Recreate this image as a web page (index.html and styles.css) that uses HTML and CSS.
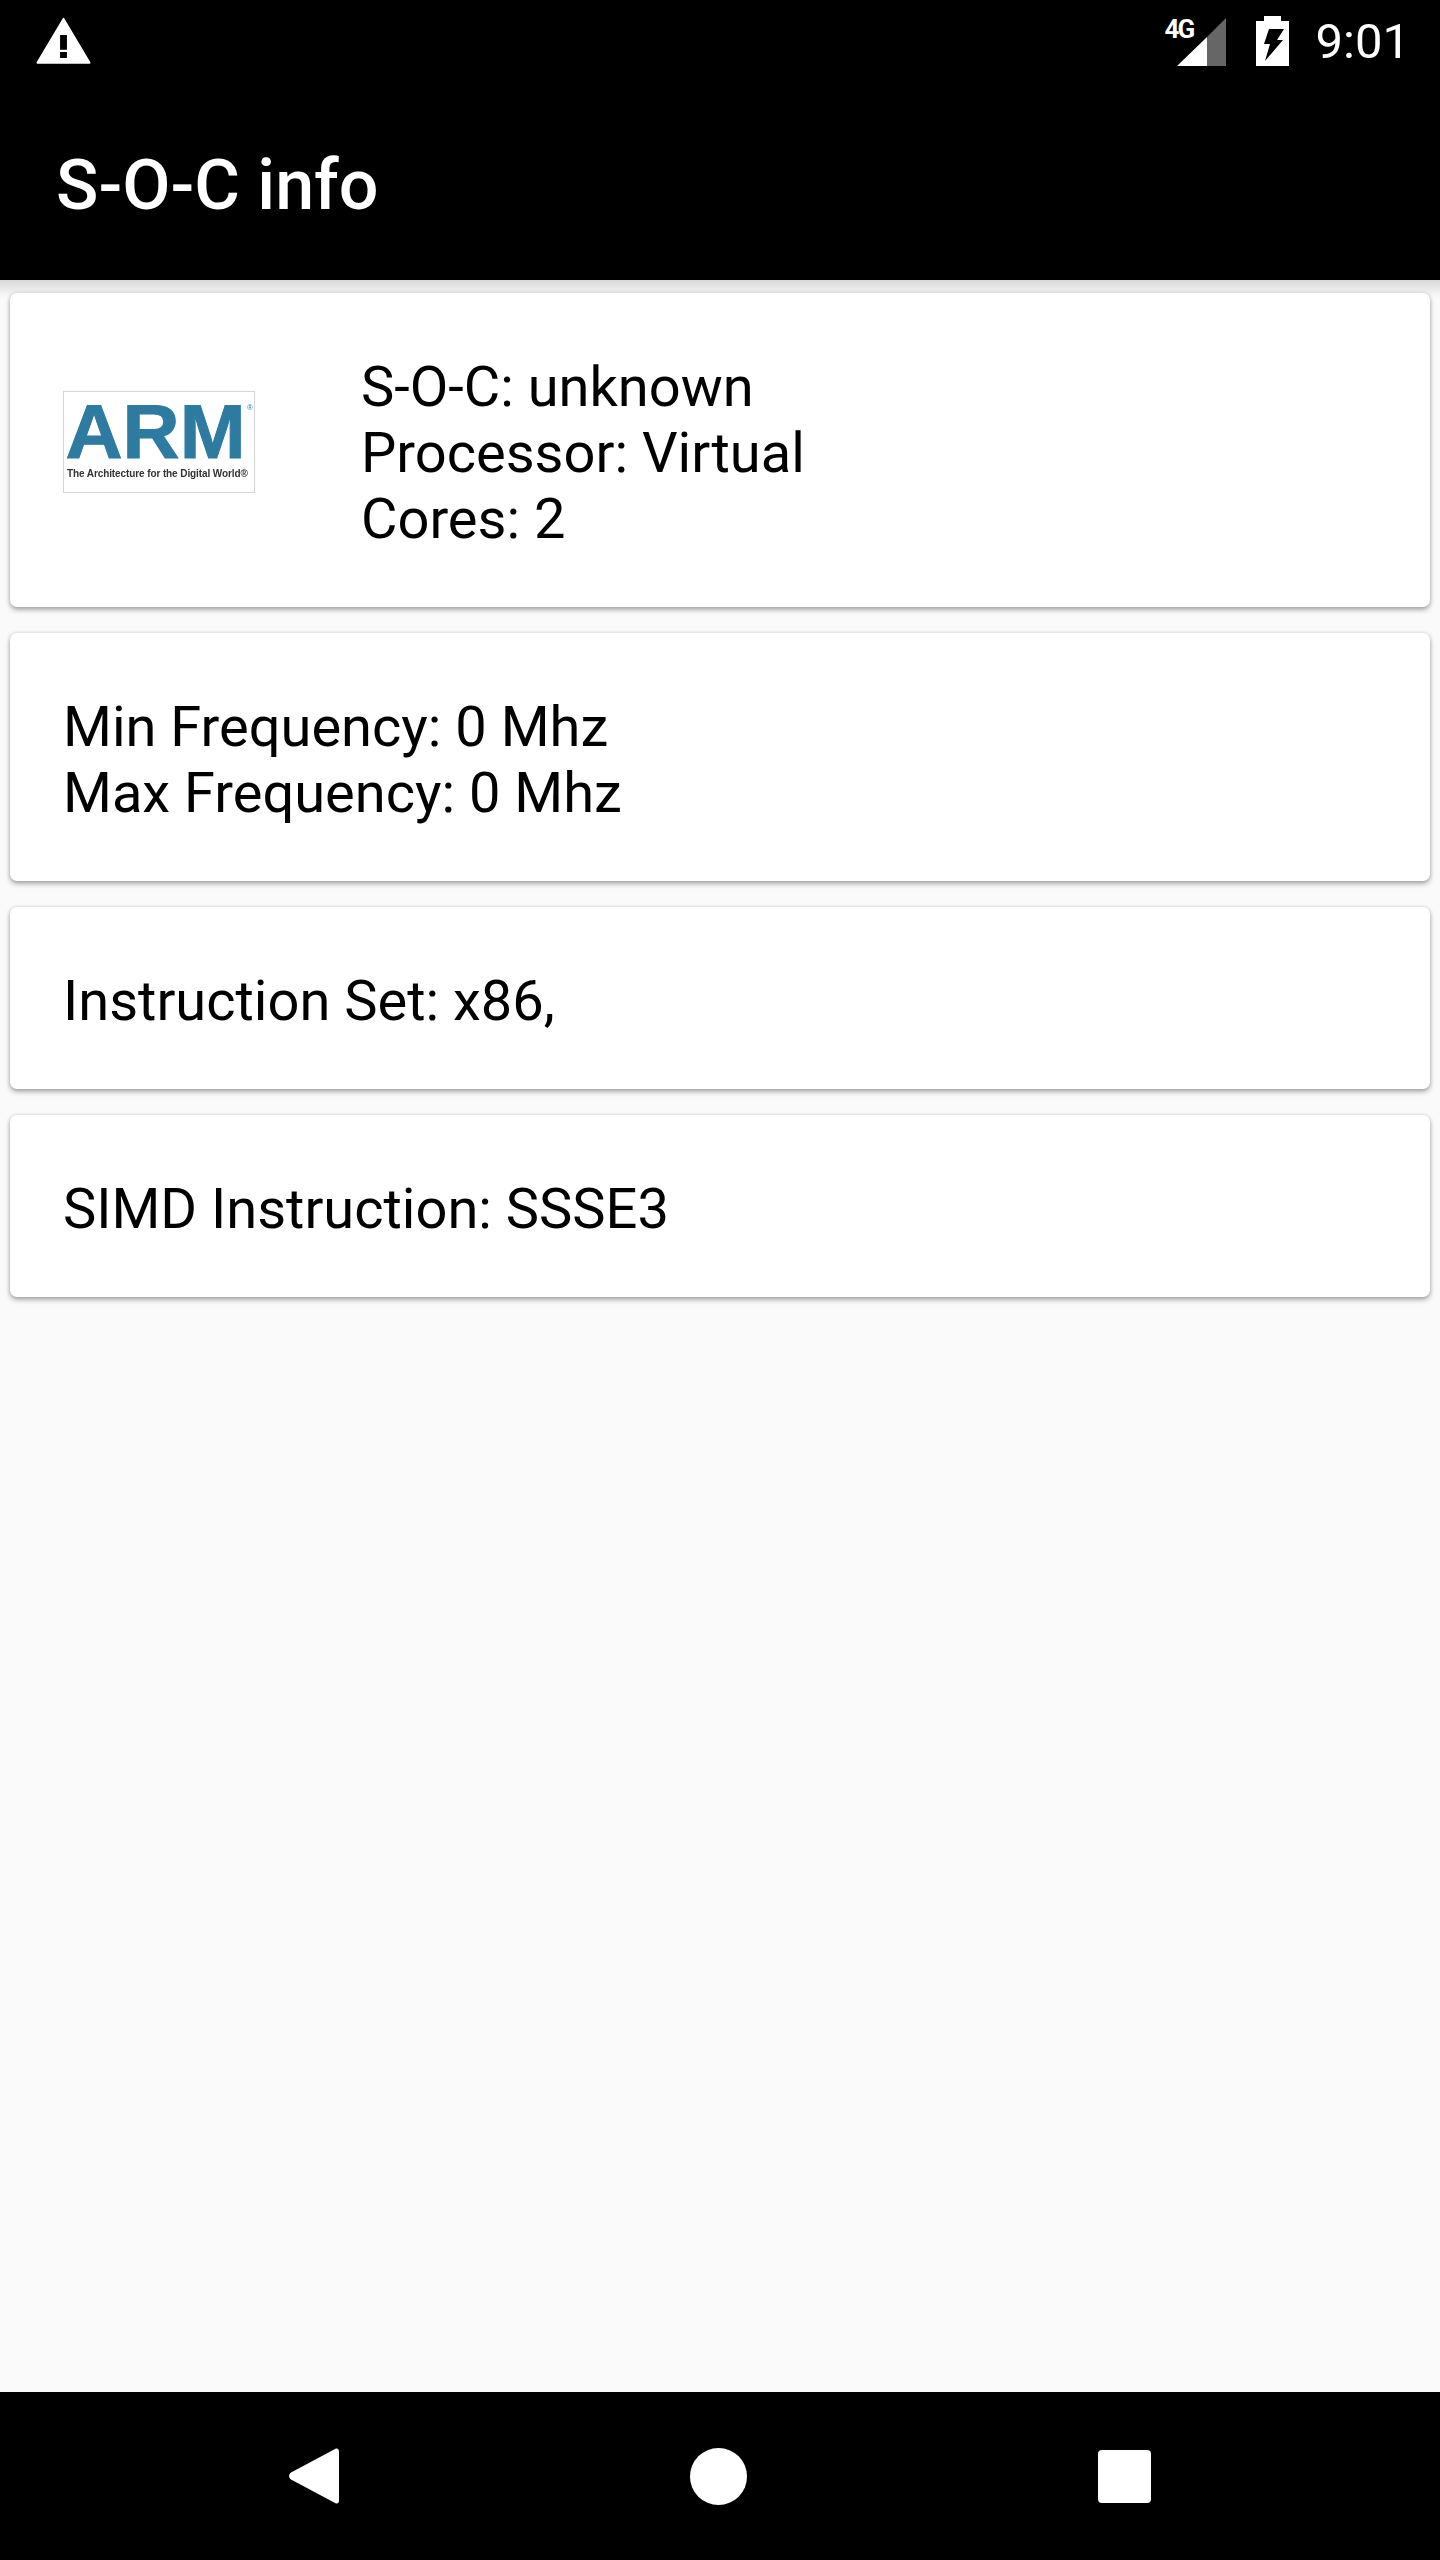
FILE: index.html
```html
<!DOCTYPE html>
<html lang="en">
<head>
    <meta charset="UTF-8">
    <meta name="viewport" content="width=device-width, initial-scale=1.0">
    <title>S-O-C info</title>
    <link rel="stylesheet" href="styles.css">
</head>
<body>
    <div class="status-bar">
        <svg class="warning-icon" viewBox="0 0 24 24">
            <path fill="#fff" stroke="#fff" stroke-width="0.8" stroke-linejoin="round" d="M1.400 20.600h21.200L12 2.800z"/>
            <path fill="#000" d="M10.600 9.400h2.800v6h-2.800zM10.600 16.300h2.800v2.400h-2.800z"/>
        </svg>
        <div class="status-right">
            <div class="signal">
                <span class="signal-label">4G</span>
                <svg class="signal-icon" viewBox="0 0 49 48"><path fill="#fff" d="M0 48 30 19V48z"/><path fill="#666" d="M30 19 49 0V48H30z"/></svg>
            </div>
            <svg class="battery-icon" viewBox="0 0 33 50"><path fill="#fff" d="M8 0h17v5h8v45H0V5h8z"/><path fill="#000" d="M13 13h15l-7 11h6L9 45l5-17H8z"/></svg>
            <span class="clock">9:01</span>
        </div>
    </div>
    <header class="app-bar">S-O-C info</header>

    <main class="content">
        <section class="card card-soc">
            <div class="arm-logo">
                <span class="arm-word">ARM</span>
                <span class="arm-reg">®</span>
                <span class="arm-tag">The Architecture for the Digital World®</span>
            </div>
            <div class="card-text">
                S-O-C: unknown<br>
                Processor: Virtual<br>
                Cores: 2
            </div>
        </section>
        <section class="card">
            <div class="card-text">
                Min Frequency: 0 Mhz<br>
                Max Frequency: 0 Mhz
            </div>
        </section>
        <section class="card">
            <div class="card-text">Instruction Set: x86,</div>
        </section>
        <section class="card">
            <div class="card-text">SIMD Instruction: SSSE3</div>
        </section>
    </main>

    <nav class="nav-bar">
        <svg class="nav-back" viewBox="0 0 50 56"><path fill="#fff" d="M47 .5C48.800 0 50 1.500 50 3.500V52.500C50 54.500 48.800 56 47 55.500L2 31.500C-.6 29.500-.6 26.500 2 24.500z"/></svg>
        <div class="nav-home"></div>
        <div class="nav-recent"></div>
    </nav>
</body>
</html>
```

FILE: styles.css
```css
body {
    margin: 0;
    height: 2560px;
    display: flex;
    flex-direction: column;
    background: #fafafa;
    font-family: Roboto, sans-serif;
    color: #000;
}

.status-bar {
    height: 84px;
    background: #000;
    display: flex;
    justify-content: space-between;
    align-items: flex-start;
    padding: 0 30px 0 34px;
}

.warning-icon {
    width: 59px;
    height: 59px;
    margin-top: 12px;
}

.status-right {
    display: flex;
    align-items: flex-start;
    color: #fff;
}

.signal {
    position: relative;
    width: 49px;
    height: 48px;
    margin-top: 18px;
}

.signal-icon {
    display: block;
    width: 49px;
    height: 48px;
}

.signal-label {
    position: absolute;
    left: -12px;
    top: -1px;
    font-size: 26px;
    line-height: 24px;
    font-weight: bold;
    letter-spacing: -2px;
}

.battery-icon {
    width: 33px;
    height: 50px;
    margin: 16px 27px 0 30px;
}

.clock {
    font-size: 49px;
    line-height: 58px;
    margin-top: 13px;
}

.app-bar {
    height: 196px;
    background: #000;
    color: #fff;
    box-sizing: border-box;
    padding: 60px 56px 0;
    font-size: 70px;
    font-weight: 500;
    line-height: 82px;
}

.content {
    flex: 1;
    display: flex;
    flex-direction: column;
    gap: 26px;
    padding: 13px 10px 0;
    background: linear-gradient(#d8d8d8, #f2f2f2 13px, #fafafa 18px) no-repeat;
}

.card {
    background: #fff;
    border-radius: 7px;
    box-shadow: 0 3px 5px rgba(0, 0, 0, 0.3), 0 0 4px rgba(0, 0, 0, 0.14);
    padding: 61px 53px 55px;
    font-size: 56px;
    line-height: 66px;
}

.card-soc {
    display: flex;
    align-items: flex-start;
}

.arm-logo {
    position: relative;
    box-sizing: border-box;
    width: 192px;
    height: 102px;
    flex-shrink: 0;
    border: 1px solid #d4d4d4;
    margin: 37px 106px 0 0;
    padding: 6px 0 0 5px;
    display: flex;
    flex-direction: column;
    align-items: flex-start;
    filter: blur(0.5px);
}

.arm-word {
    color: #2d7ba1;
    font-family: "Liberation Sans", sans-serif;
    font-weight: bold;
    font-size: 76px;
    line-height: 68px;
    -webkit-text-stroke: 1px #2d7ba1;
    transform: scaleX(1.04);
}

.arm-reg {
    position: absolute;
    top: 12px;
    right: 1px;
    color: #2d7ba1;
    font-family: "Liberation Sans", sans-serif;
    font-size: 8px;
    line-height: 8px;
}

.arm-tag {
    color: #333;
    font-family: "Liberation Sans", sans-serif;
    font-size: 10px;
    font-weight: bold;
    letter-spacing: -0.1px;
    line-height: 14px;
    margin: 1px 0 0 -2px;
    white-space: nowrap;
}

.nav-bar {
    height: 168px;
    background: #000;
    display: flex;
    justify-content: center;
    align-items: center;
    gap: 351px;
}

.nav-back {
    width: 50px;
    height: 56px;
}

.nav-home {
    width: 57px;
    height: 57px;
    border-radius: 50%;
    background: #fff;
}

.nav-recent {
    width: 53px;
    height: 53px;
    border-radius: 4px;
    background: #fff;
}
```
